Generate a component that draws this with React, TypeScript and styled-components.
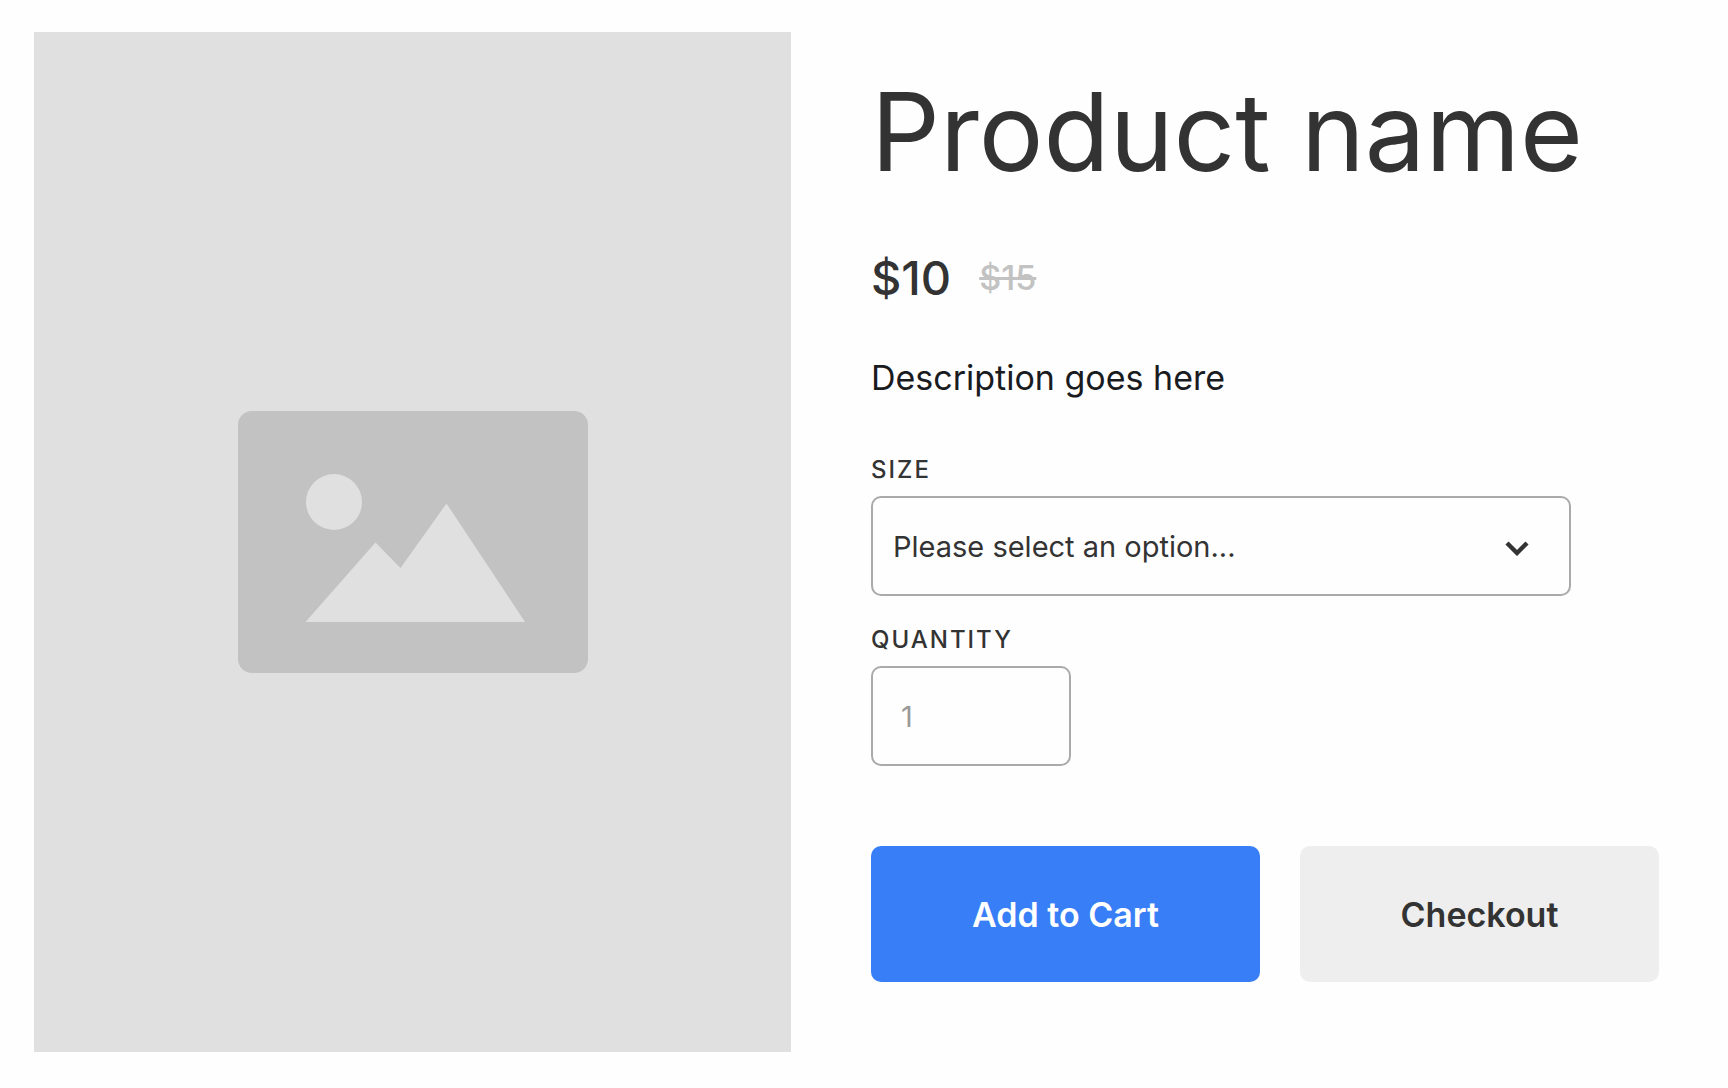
import React from "react";
import styled, { createGlobalStyle } from "styled-components";

const GlobalStyle = createGlobalStyle`
  *, *::before, *::after { box-sizing: border-box; }
  body {
    margin: 0;
    background: #fefefe;
    color: #333333;
    font-family: Inter, "Liberation Sans", sans-serif;
  }
  button, input, select { font-family: inherit; }
`;

const Product = styled.main`
  display: grid;
  grid-template-columns: minmax(0, 757fr) minmax(0, 788fr);
  gap: 80px;
  padding: 32px 69px 36px 34px;
`;

const Media = styled.div`
  display: flex;
  align-items: center;
  justify-content: center;
  min-height: 1020px;
  background: #e0e0e0;
`;

const Details = styled.section`
  display: flex;
  flex-direction: column;
  padding-top: 40px;
`;

const Title = styled.h1`
  margin: 0 0 56px;
  font-size: 108px;
  line-height: 120px;
  font-weight: 400;
  white-space: nowrap;
`;

const Prices = styled.div`
  display: flex;
  align-items: center;
  gap: 28px;
  margin-bottom: 50px;
  line-height: 60px;
`;

const Price = styled.span`
  font-size: 47px;
  font-weight: 500;
`;

const OldPrice = styled.s`
  font-size: 34px;
  font-weight: 500;
  color: #c2c2c2;
`;

const Description = styled.p`
  margin: 0 0 58px;
  font-size: 34px;
  line-height: 40px;
  color: #1a1b1f;
`;

const Form = styled.form`
  display: flex;
  flex-direction: column;
`;

const Field = styled.div<{ $width: number }>`
  display: flex;
  flex-direction: column;
  gap: 12px;
  width: 100%;
  max-width: ${(p) => p.$width}px;
  margin-bottom: 30px;

  &:last-of-type { margin-bottom: 0; }
`;

const Label = styled.label`
  font-size: 24px;
  line-height: 28px;
  font-weight: 500;
  letter-spacing: 2px;
  text-transform: uppercase;
`;

const SelectWrap = styled.div`
  position: relative;
  display: flex;
`;

const Select = styled.select`
  appearance: none;
  width: 100%;
  height: 100px;
  padding: 0 80px 0 20px;
  border: 2px solid #aaaaaa;
  border-radius: 10px;
  background: transparent;
  color: #333333;
  font-size: 29px;
`;

const Chevron = styled.svg`
  position: absolute;
  top: 40px;
  right: 42px;
  pointer-events: none;
`;

const QuantityInput = styled.input`
  width: 100%;
  height: 100px;
  padding: 0 28px;
  border: 2px solid #aaaaaa;
  border-radius: 10px;
  background: transparent;
  color: #999999;
  font-size: 29px;
`;

const Actions = styled.footer`
  display: grid;
  grid-template-columns: 389fr 359fr;
  gap: 40px;
  margin-top: 80px;
`;

const Button = styled.button<{ $primary?: boolean }>`
  height: 136px;
  padding: 0;
  border: 0;
  border-radius: 10px;
  background: ${(p) => (p.$primary ? "#387ef7" : "#eeeeee")};
  color: ${(p) => (p.$primary ? "#ffffff" : "#333333")};
  font-size: 34px;
  font-weight: 600;
  cursor: pointer;
`;

function ImagePlaceholder() {
  return (
    <svg width="350" height="262" viewBox="0 0 350 262" role="img" aria-label="Product image">
      <rect width="350" height="262" rx="14" fill="#c2c2c2" />
      <circle cx="96" cy="91" r="28" fill="#e0e0e0" />
      <path d="M67.5 211 L137.5 131.5 L162.5 157 L208.5 92.5 L287 211 Z" fill="#e0e0e0" />
    </svg>
  );
}

export default function App() {
  return (
    <>
      <GlobalStyle />
      <Product>
        <Media>
          <ImagePlaceholder />
        </Media>
        <Details>
          <Title>Product name</Title>
          <Prices>
            <Price>$10</Price>
            <OldPrice>$15</OldPrice>
          </Prices>
          <Description>Description goes here</Description>
          <Form onSubmit={(e) => e.preventDefault()}>
            <Field $width={700}>
              <Label htmlFor="size">Size</Label>
              <SelectWrap>
                <Select id="size" defaultValue="">
                  <option value="">Please select an option...</option>
                </Select>
                <Chevron width="24" height="20" viewBox="0 0 24 20" fill="none" aria-hidden="true">
                  <path d="M2 7 L12 17 L22 7" stroke="#333333" strokeWidth="4.4" />
                </Chevron>
              </SelectWrap>
            </Field>
            <Field $width={200}>
              <Label htmlFor="quantity">Quantity</Label>
              <QuantityInput id="quantity" inputMode="numeric" defaultValue="1" />
            </Field>
            <Actions>
              <Button type="submit" $primary>Add to Cart</Button>
              <Button type="button">Checkout</Button>
            </Actions>
          </Form>
        </Details>
      </Product>
    </>
  );
}
